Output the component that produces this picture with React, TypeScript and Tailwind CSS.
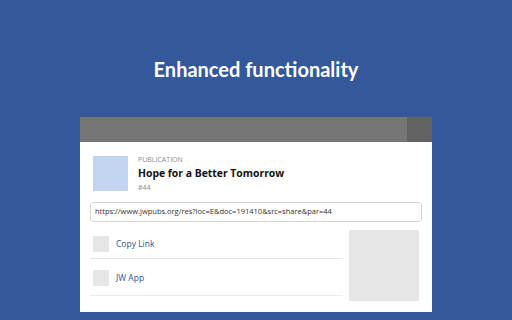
export default function App() {
  return (
    <div className="flex h-[320px] w-[512px] flex-col items-center overflow-hidden bg-[#34589a] font-['Open_Sans',sans-serif]">
      <h1 className="mt-[55px] font-['Lato',sans-serif] text-[20px] font-bold leading-[28px] text-white">
        Enhanced functionality
      </h1>
      <div className="mt-[34px] flex w-[352px] flex-col bg-white">
        <div className="flex h-[25px] bg-[#767676]">
          <div className="ml-auto w-[25px] bg-[#636363]" />
        </div>
        <div className="flex items-center gap-[10px] px-[13px] pt-[12px]">
          <div className="h-[35px] w-[35px] bg-[#c3d4f0]" />
          <div className="flex flex-col">
            <span className="text-[7px] leading-[11px] text-[#8a8a8a]">PUBLICATION</span>
            <span className="text-[10.4px] font-bold leading-[17px] text-[#111]">Hope for a Better Tomorrow</span>
            <span className="text-[7px] leading-[11px] text-[#8a8a8a]">#44</span>
          </div>
        </div>
        <div className="mx-[10px] mt-[9px] flex h-[20px] items-center rounded-[3px] border border-[#d6d6d6] px-[4px] text-[7.5px] text-[#333]">
          https://www.jwpubs.org/res?loc=E&amp;doc=191410&amp;src=share&amp;par=44
        </div>
        <div className="flex gap-[6px] pt-[8px] pr-[13px] pb-[11px] pl-[10px]">
          <div className="flex flex-1 flex-col">
            <div className="flex h-[29px] items-center gap-[7px] border-b border-[#e6e6e6] px-[3px]">
              <div className="h-[16px] w-[16px] bg-[#e6e6e6]" />
              <span className="text-[8.5px] text-[#2f5296]">Copy Link</span>
            </div>
            <div className="flex h-[37px] items-center gap-[7px] border-b border-[#ececec] px-[3px] pt-[2px]">
              <div className="h-[16px] w-[16px] bg-[#e6e6e6]" />
              <span className="text-[8.5px] text-[#2f5296]">JW App</span>
            </div>
          </div>
          <div className="h-[71px] w-[70px] bg-[#e6e6e6]" />
        </div>
      </div>
    </div>
  );
}
